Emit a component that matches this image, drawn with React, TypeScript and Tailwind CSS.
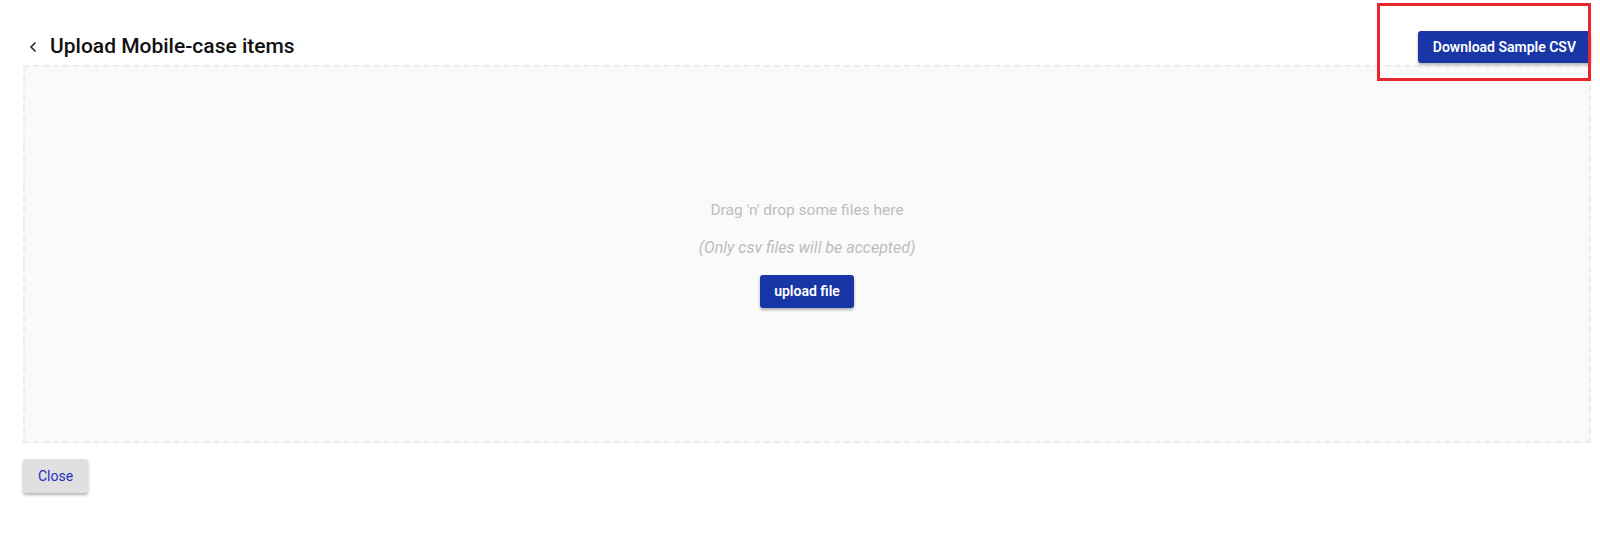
import { ChevronLeft } from "lucide-react";

export default function App() {
  return (
    <div
      className="relative w-[1600px] h-[542px] bg-white pl-[23px] pr-[9px] pt-[31px]"
      style={{ fontFamily: "Roboto, 'Liberation Sans', sans-serif" }}
    >
      {/* header */}
      <div className="flex items-center justify-between h-[32px]">
        <div className="flex items-center">
          <ChevronLeft size={16} strokeWidth={2.5} className="ml-[2px] text-[#222]" />
          <h1 className="ml-[9px] text-[21px] font-medium text-[#111]">Upload Mobile-case items</h1>
        </div>
        <button className="h-[32px] px-[15px] rounded-[3px] bg-[#1836a6] text-white text-[14px] font-semibold shadow-[0_2px_3px_rgba(0,0,0,0.3)]">
          Download Sample CSV
        </button>
      </div>

      {/* dropzone */}
      <div className="mt-[2px] h-[378px] border-2 border-dashed border-[#ececec] bg-[#fafafa] flex flex-col items-center justify-center">
        <p className="leading-[20px] text-[15.5px] text-[#bdbdbd]">Drag 'n' drop some files here</p>
        <p className="mt-[18px] leading-[20px] text-[16px] italic text-[#bdbdbd]">(Only csv files will be accepted)</p>
        <button className="mt-[17px] h-[33px] px-[14px] rounded-[3px] bg-[#1836a6] text-white text-[14px] font-semibold shadow-[0_2px_3px_rgba(0,0,0,0.3)]">
          upload file
        </button>
      </div>

      <button className="mt-[16px] h-[34px] w-[65px] rounded-[3px] bg-[#e0e0e0] text-[#1f2fc0] text-[14px] shadow-[0_2px_3px_rgba(0,0,0,0.3)]">
        Close
      </button>

      {/* annotation box */}
      <div className="absolute left-[1377px] top-[3px] w-[214px] h-[78px] border-[3px] border-[#e8262d]" />
    </div>
  );
}
